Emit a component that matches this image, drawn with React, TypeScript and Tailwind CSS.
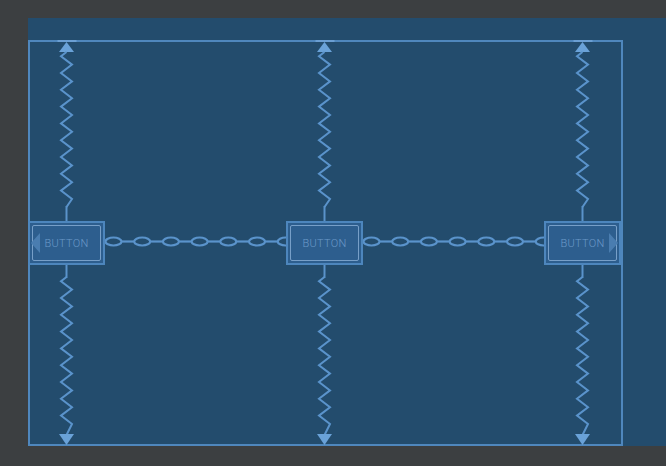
const LINE = '#5a93cb'

function zigzag(x: number, y0: number, y1: number, amp: number, step: number) {
  const pts: string[] = [`${x},${y0}`]
  let y = y0 + step / 2
  let dir = -1
  while (y < y1 - step / 2) {
    pts.push(`${x + dir * amp},${y}`)
    dir = -dir
    y += step
  }
  pts.push(`${x},${y1}`)
  return pts.join(' ')
}

function TopSpring() {
  const c = 38.5
  return (
    <svg width={77} height={181} className="block">
      <line x1={c - 9} y1={1} x2={c + 10} y2={1} stroke="#6b9fd3" strokeWidth={2} />
      <polygon points={`${c},2 ${c - 7.5},12 ${c + 7.5},12`} fill="#6aa2d8" />
      <polyline points={zigzag(c, 12, 167, 5.5, 8.4)} fill="none" stroke={LINE} strokeWidth={2} />
      <line x1={c} y1={166} x2={c} y2={181} stroke={LINE} strokeWidth={2} />
    </svg>
  )
}

function BottomSpring() {
  const c = 38.5
  return (
    <svg width={77} height={181} className="block">
      <line x1={c} y1={0} x2={c} y2={13} stroke={LINE} strokeWidth={2} />
      <polyline points={zigzag(c, 12, 170, 5.5, 8.4)} fill="none" stroke={LINE} strokeWidth={2} />
      <polygon points={`${c},180 ${c - 7.5},169 ${c + 7.5},169`} fill="#6aa2d8" />
    </svg>
  )
}

function Chain() {
  const links = []
  for (let i = 0; i < 7; i++) {
    const x = i * 28.7
    links.push(
      <g key={i}>
        <ellipse cx={x + 8.5} cy={20.5} rx={8} ry={4} fill="none" stroke={LINE} strokeWidth={2.2} />
        <line x1={x + 16.5} y1={20.5} x2={x + 29.2} y2={20.5} stroke={LINE} strokeWidth={2.2} />
      </g>
    )
  }
  return (
    <div className="w-full h-[44px] overflow-hidden">
      <svg width="100%" height={44} className="block">
        {links}
      </svg>
    </div>
  )
}

function Button({ arrow }: { arrow?: 'left' | 'right' }) {
  return (
    <div className="relative w-[77px] h-[44px] border-2 border-[#4d86bd] bg-[#2d5e8e] p-[2px]">
      <div className="h-full border border-[#779fc8] rounded-[2px] flex items-center justify-center">
        <span className="text-[11px] tracking-[0.3px] text-[#6b99c8] font-['Roboto',sans-serif] font-light leading-none">BUTTON</span>
      </div>
      {arrow === 'left' && (
        <svg width={10} height={20} className="absolute left-[1px] top-[10px]">
          <polygon points="0,10 9,0 9,20" fill="#4a7db0" />
        </svg>
      )}
      {arrow === 'right' && (
        <svg width={10} height={20} className="absolute right-[1px] top-[10px]">
          <polygon points="10,10 1,0 1,20" fill="#4a7db0" />
        </svg>
      )}
    </div>
  )
}

function Column({ arrow }: { arrow?: 'left' | 'right' }) {
  return (
    <div className="flex flex-col w-[77px]">
      <TopSpring />
      <Button arrow={arrow} />
      <BottomSpring />
    </div>
  )
}

export default function App() {
  return (
    <div className="w-[666px] h-[466px] bg-[#3c3f41] pt-[18px] pl-[28px] overflow-hidden">
      <div className="h-[428px] bg-[#234c6d] pt-[22px]">
        <div className="relative w-[595px] h-[406px]">
          <div className="absolute inset-0 border-2 border-[#4f87bd]" />
          <div className="relative flex w-[593px]">
            <Column arrow="left" />
            <div className="flex-1 flex flex-col justify-center">
              <Chain />
            </div>
            <Column />
            <div className="flex-1 flex flex-col justify-center">
              <Chain />
            </div>
            <Column arrow="right" />
          </div>
        </div>
      </div>
    </div>
  )
}
